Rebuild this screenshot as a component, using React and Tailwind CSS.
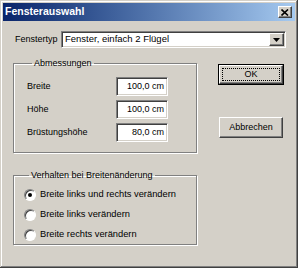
import React from "react";

const sunken =
  "border border-t-[#808080] border-l-[#808080] border-b-white border-r-white shadow-[inset_1px_1px_0_#404040,inset_-1px_-1px_0_#d4d0c8]";
const raised =
  "border border-t-white border-l-white border-b-[#404040] border-r-[#404040] shadow-[inset_-1px_-1px_0_#808080]";

function Field({ label, value }) {
  return (
    <div className="flex items-center h-[19px]">
      <span className="w-[89px]">{label}</span>
      <div className={`w-[52px] h-[19px] bg-white flex items-center justify-end pr-[3px] ${sunken}`}>
        {value}
      </div>
    </div>
  );
}

function Radio({ label, checked }) {
  return (
    <div className="flex items-center h-[20px]">
      <div className="w-[12px] h-[12px] rounded-full bg-white flex items-center justify-center border border-t-[#808080] border-l-[#808080] border-b-white border-r-white shadow-[inset_1px_1px_0_#404040]">
        {checked && <div className="w-[4px] h-[4px] rounded-full bg-black" />}
      </div>
      <span className="ml-[4px] text-[9.3px]">{label}</span>
    </div>
  );
}

function Group({ title, className, children }) {
  return (
    <fieldset
      className={`border border-[#808080] shadow-[1px_1px_0_#fff,inset_1px_1px_0_#fff] ${className}`}
    >
      <legend className="ml-[5px] px-[2px] leading-[11px]">{title}</legend>
      {children}
    </fieldset>
  );
}

export default function App() {
  return (
    <div className="w-[299px] h-[269px] bg-white font-['Liberation_Sans',Arial,sans-serif] text-[9px] text-black">
      <div className="w-[298px] h-[268px] bg-[#d4d0c8] p-[3px] shadow-[inset_-1px_-1px_0_#404040,inset_1px_1px_0_#d4d0c8,inset_-2px_-2px_0_#808080,inset_2px_2px_0_#fff] flex flex-col">
        <div className="h-[18px] bg-linear-to-r from-[#0a246a] to-[#a6caf0] flex items-center justify-between pl-[2px] pr-[3px]">
          <span className="text-white font-bold text-[10.5px]">Fensterauswahl</span>
          <div className={`w-[14px] h-[12px] bg-[#d4d0c8] flex items-center justify-center ${raised}`}>
            <svg width="8" height="7" viewBox="0 0 8 7">
              <path d="M0.5 0.5 L7 6.5 M7 0.5 L0.5 6.5" stroke="#000" strokeWidth="1.6" />
            </svg>
          </div>
        </div>

        <div className="flex items-center mt-[10px] pl-[12px]">
          <span className="w-[46px]">Fenstertyp</span>
          <div className={`w-[225px] h-[17px] bg-white flex items-center ${sunken}`}>
            <span className="flex-1 pl-[3px] text-[9.5px]">Fenster, einfach 2 Flügel</span>
            <div className={`w-[15px] h-[13px] mr-[1px] bg-[#d4d0c8] flex items-center justify-center ${raised}`}>
              <svg width="7" height="4" viewBox="0 0 7 4">
                <path d="M0 0 H7 L3.5 4 Z" fill="#000" />
              </svg>
            </div>
          </div>
        </div>

        <div className="flex mt-[10px] pl-[10px]">
          <div className="flex flex-col w-[184px]">
            <Group title="Abmessungen" className="h-[95px] pl-[13px] pt-[8px] flex flex-col gap-[4px]">
              <Field label="Breite" value="100,0 cm" />
              <Field label="Höhe" value="100,0 cm" />
              <Field label="Brüstungshöhe" value="80,0 cm" />
            </Group>
            <Group
              title="Verhalten bei Breitenänderung"
              className="mt-[17px] h-[75px] pl-[10px] pt-[4px] flex flex-col"
            >
              <Radio label="Breite links und rechts verändern" checked />
              <Radio label="Breite links verändern" />
              <Radio label="Breite rechts verändern" />
            </Group>
          </div>

          <div className="flex flex-col ml-[21px] mt-[6px]">
            <div className="w-[66px] h-[21px] border border-black">
              <div className={`w-full h-full bg-[#d4d0c8] flex items-center justify-center p-[2px] ${raised}`}>
                <div className="w-full h-full border border-dotted border-black flex items-center justify-center">
                  OK
                </div>
              </div>
            </div>
            <div className={`w-[64px] h-[21px] mt-[32px] ml-[1px] bg-[#d4d0c8] flex items-center justify-center ${raised}`}>
              Abbrechen
            </div>
          </div>
        </div>
      </div>
    </div>
  );
}
